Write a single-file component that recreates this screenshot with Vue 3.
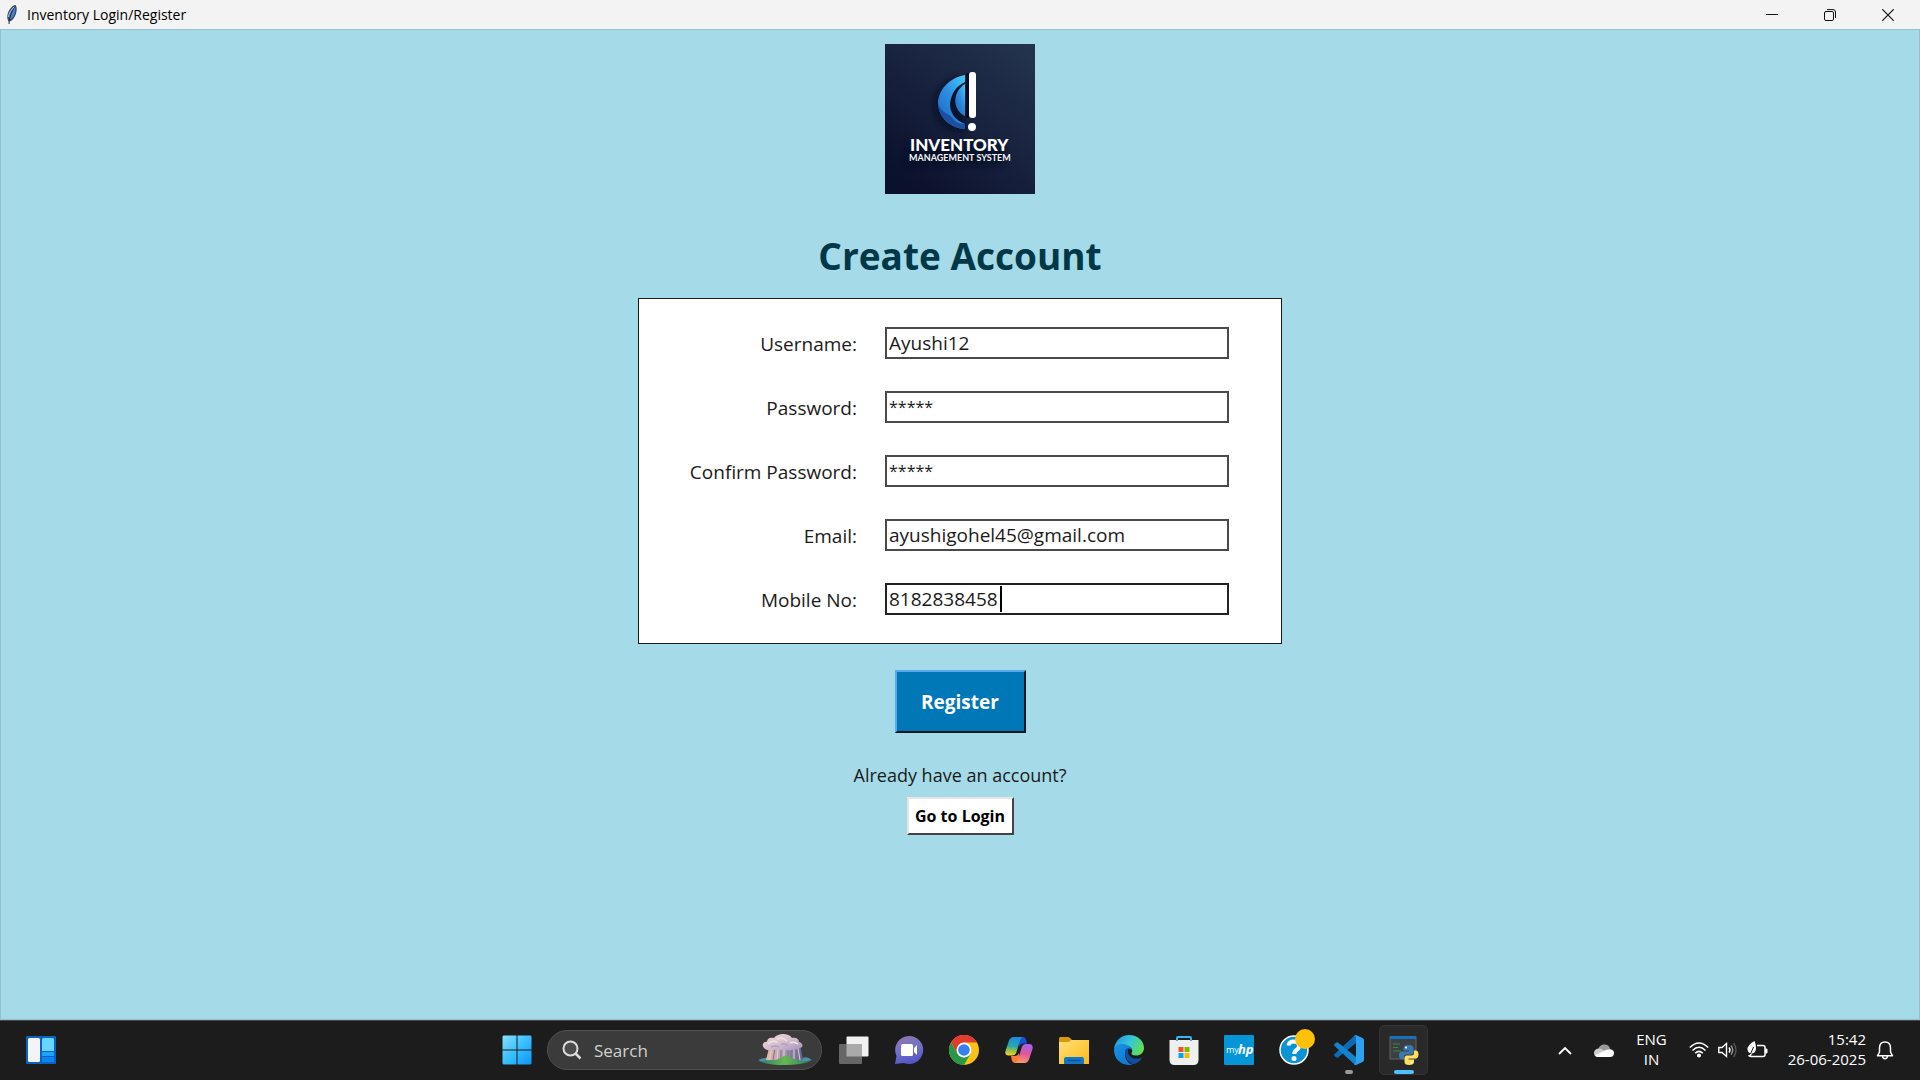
<script setup>
import { reactive } from 'vue'

const fields = reactive([
  { id: 'username', label: 'Username:', value: 'Ayushi12' },
  { id: 'password', label: 'Password:', value: '*****', masked: true },
  { id: 'confirm', label: 'Confirm Password:', value: '*****', masked: true },
  { id: 'email', label: 'Email:', value: 'ayushigohel45@gmail.com' },
  { id: 'mobile', label: 'Mobile No:', value: '8182838458', active: true }
])
</script>

<template>
  <div class="desktop">
    <header class="titlebar">
      <svg class="feather" width="14" height="22" viewBox="0 0 14 22">
        <path d="M10.500 1C12.500 3 12 9 9.500 13C8 16 5.500 17.500 3.500 17.500C1.500 14 2 9 5 5C7 2.500 9 1 10.500 1Z" fill="#3b4a60" />
        <path d="M10 2.500C11 5 10 10 8 13C7 14.500 5.500 15.500 4.500 15.500C4 12 5 8 7 5Z" fill="#3f83dd" />
        <path d="M9.500 3C7 7 4.500 12 4 20" fill="none" stroke="#1f2530" stroke-width="1" />
        <path d="M9 3C6 6 4 9 3.500 13" fill="none" stroke="#c3cad4" stroke-width="1" />
      </svg>
      <span class="caption">Inventory Login/Register</span>
      <button class="winbtn" type="button" aria-label="Minimize">
        <svg width="12" height="12" viewBox="0 0 12 12"><path d="M0 5.500H12" stroke="#111" /></svg>
      </button>
      <button class="winbtn" type="button" aria-label="Restore">
        <svg width="12" height="12" viewBox="0 0 12 12" fill="none" stroke="#111">
          <rect x=".5" y="2.500" width="9" height="9" rx="1.500" />
          <path d="M3 .6H9Q11.500 .6 11.500 3V9" />
        </svg>
      </button>
      <button class="winbtn" type="button" aria-label="Close">
        <svg width="12" height="12" viewBox="0 0 12 12"><path d="M.3 .3L11.700 11.700M11.700 .3L.3 11.700" stroke="#111" stroke-width="1.200" /></svg>
      </button>
    </header>

    <main class="client">
      <svg class="logo" width="150" height="150" viewBox="0 0 150 150">
        <defs>
          <linearGradient id="lgBg" x1="1" y1="0" x2=".2" y2="1">
            <stop offset="0" stop-color="#24344f" /><stop offset=".5" stop-color="#18233f" /><stop offset="1" stop-color="#0b102c" />
          </linearGradient>
          <linearGradient id="lgArc" x1="1" y1="0" x2=".3" y2="1">
            <stop offset="0" stop-color="#43cdfb" /><stop offset=".5" stop-color="#2d8fe2" /><stop offset="1" stop-color="#1f6ac4" />
          </linearGradient>
          <filter id="lgSh" x="-30%" y="-30%" width="160%" height="160%"><feGaussianBlur stdDeviation="3" /></filter>
        </defs>
        <rect width="150" height="150" fill="url(#lgBg)" />
        <path d="M76 32C58 36 48 50 49 62C50 76 62 88 80 88Z" fill="#050920" opacity=".7" filter="url(#lgSh)" />
        <path d="M22 100H120V122H20Z" fill="#050920" opacity=".6" filter="url(#lgSh)" />
        <path d="M80 31C64 34 53 46 53 60C54 74 65 84 80 85V80C70 76 65 69 65 60C66 50 71 42 80 38Z" fill="url(#lgArc)" />
        <path d="M53 59C55 69 65 69 69 76C72 79 76 80 80 80V85C65 84 54 74 53 59Z" fill="#1d4f9f" />
        <path d="M80 40C67 48 67 66 80 72Z" fill="url(#lgArc)" />
        <rect x="81" y="29" width="3" height="45" fill="#070c20" />
        <rect x="84" y="28" width="7" height="46" rx="3" fill="#fff" />
        <circle cx="87" cy="83" r="4" fill="#fff" />
        <text x="25" y="107" class="logo-a">INVENTORY</text>
        <text x="24" y="117" class="logo-b">MANAGEMENT SYSTEM</text>
      </svg>

      <h1>Create Account</h1>

      <form id="register" class="card" @submit.prevent>
        <div v-for="f in fields" :key="f.id" class="row">
          <label :for="f.id">{{ f.label }}</label>
          <div class="entry">
            <input :id="f.id" v-model="f.value" type="text" autocomplete="off" :class="{ active: f.active, masked: f.masked }" />
            <span v-if="f.active" class="caret"></span>
          </div>
        </div>
      </form>

      <button class="register" type="submit" form="register">Register</button>
      <p>Already have an account?</p>
      <button class="login" type="button">Go to Login</button>
    </main>

    <footer class="taskbar">
      <div class="left">
        <svg width="30" height="28" viewBox="0 0 30 28">
          <rect width="30" height="28" rx="1" fill="#0c63bd" />
          <rect x="2" y="2" width="12" height="24" rx="1.500" fill="#f4f4f6" />
          <path d="M16 3.500Q16 2 17.500 2H26.500Q28 2 28 3.500V15H16Z" fill="#66d5ff" />
          <rect x="16" y="16" width="12" height="4" fill="#1ba4ff" />
          <rect x="16" y="21" width="12" height="5" fill="#0a86f2" />
        </svg>
      </div>

      <nav class="apps">
        <button class="app" type="button" aria-label="Start">
          <svg width="30" height="30" viewBox="0 0 30 30">
            <defs><linearGradient id="win" x1="0" y1="0" x2="1" y2="1"><stop offset="0" stop-color="#86e0ff" /><stop offset=".5" stop-color="#39bffd" /><stop offset="1" stop-color="#0c95fb" /></linearGradient></defs>
            <path d="M1.500 .5H14.500V14.500H.5V1.500ZM15.500 .5H28.500L29.500 1.500V14.500H15.500ZM.5 15.500H14.500V29.500H1.500L.5 28.500ZM15.500 15.500H29.500V28.500L28.500 29.500H15.500Z" fill="url(#win)" />
          </svg>
        </button>

        <label class="search">
          <svg width="20" height="20" viewBox="0 0 20 20" fill="none" stroke="#dcdcdc" stroke-width="2">
            <circle cx="8.500" cy="8.500" r="7" fill="#4c4c4c" /><path d="M13.500 13.500L18.500 18.500" stroke-width="2.500" />
          </svg>
          <input type="text" placeholder="Search" aria-label="Search" />
          <svg class="scene" width="54" height="32" viewBox="0 0 54 32">
            <defs>
              <linearGradient id="pil" x1="0" x2="1"><stop offset="0" stop-color="#e8b8a4" /><stop offset=".4" stop-color="#b9a4b8" /><stop offset="1" stop-color="#58658c" /></linearGradient>
              <linearGradient id="hill" x1="0" x2="1"><stop offset="0" stop-color="#2c7f58" /><stop offset=".5" stop-color="#67b756" /><stop offset="1" stop-color="#2a7a61" /></linearGradient>
              <linearGradient id="puff" x1="0" x2="1" y1="0" y2="1"><stop offset="0" stop-color="#efdcd6" /><stop offset=".5" stop-color="#d6bfd0" /><stop offset="1" stop-color="#a692bf" /></linearGradient>
            </defs>
            <path d="M0 26Q8 22 14 25H42Q48 21 54 26Q44 30 27 30Q8 30 0 26Z" fill="#4a8eb0" />
            <path d="M12 10H42L45 26H8Z" fill="url(#pil)" />
            <path d="M14 14L11 26M20 14L19 26M26 14V24M36 14V25M40 14L42 26" stroke="#e9cfc6" />
            <path d="M17 14L15 26M23 14V25M30 14V25M33 14V25" stroke="#77708c" />
            <path d="M6 14C3 11 6 7 9 8C9 4 13 3 16 4C18 1 22 0 25 0C29 0 32 1 34 4C38 3 41 5 41 8C45 9 46 13 42 14C39 16 36 15 34 16C30 17 27 15 24 16C20 17 17 15 14 16C11 17 8 16 6 14Z" fill="url(#puff)" />
            <path d="M10 10Q14 6 19 8M19 5Q25 3 29 7M32 9Q36 7 40 10" fill="none" stroke="#f2e4df" stroke-width="1.500" />
            <path d="M13 13Q17 11 21 13M23 10Q27 9 30 12" fill="none" stroke="#b49fbc" stroke-width="1.500" />
            <path d="M1 27Q10 27 18 26L28 21L38 26Q46 28 53 27Q44 31 27 31Q10 31 1 27Z" fill="url(#hill)" />
          </svg>
        </label>

        <button class="app" type="button" aria-label="Task View">
          <svg width="30" height="28" viewBox="0 0 30 28"><rect x="7.500" y=".5" width="22" height="20" rx="1" fill="#f1f1f1" /><rect x="0" y="8" width="23" height="20" rx="1" fill="#666" /><path d="M7.500 8H23V20.500H7.500Z" fill="#aaa" /></svg>
        </button>
        <button class="app" type="button" aria-label="Chat">
          <svg width="30" height="30" viewBox="0 0 30 30">
            <defs><linearGradient id="chat" x1=".2" y1="0" x2=".5" y2="1"><stop offset="0" stop-color="#9076ae" /><stop offset=".5" stop-color="#7272c8" /><stop offset="1" stop-color="#5453c8" /></linearGradient></defs>
            <path d="M15 1A14 14 0 1 1 10 28L1 29L2.500 21A14 14 0 0 1 15 1Z" fill="url(#chat)" />
            <rect x="7" y="9" width="12" height="12" rx="1.500" fill="#fff" /><path d="M20 13L23 10V20L20 17Z" fill="#fff" />
          </svg>
        </button>
        <button class="app" type="button" aria-label="Chrome">
          <svg width="30" height="30" viewBox="0 0 30 30">
            <circle cx="15" cy="15" r="15" fill="#fbc116" />
            <path d="M15 15L8.500 18.700L2 7.500A15 15 0 0 1 28 7.500H15Z" fill="#e33b2e" />
            <path d="M15 22.500L8.500 18.700L2 7.500A15 15 0 0 0 15 30L21.500 18.700Z" fill="#279847" />
            <circle cx="15" cy="15" r="7.500" fill="#fff" /><circle cx="15" cy="15" r="5.800" fill="#3480ee" />
          </svg>
        </button>
        <button class="app" type="button" aria-label="Copilot">
          <svg width="30" height="30" viewBox="0 0 30 30">
            <defs>
              <linearGradient id="cpA" x1=".5" y1="0" x2=".4" y2="1"><stop offset="0" stop-color="#178de8" /><stop offset=".5" stop-color="#2aa7a8" /><stop offset=".8" stop-color="#a9c63b" /><stop offset="1" stop-color="#f6cf26" /></linearGradient>
              <linearGradient id="cpB" x1=".6" y1="0" x2=".4" y2="1"><stop offset="0" stop-color="#a462f0" /><stop offset=".5" stop-color="#e0559f" /><stop offset="1" stop-color="#fb9a62" /></linearGradient>
            </defs>
            <path d="M15 2H19.500Q21.500 2 22.200 5L23 8.500H20Q16 8.500 15 12Z" fill="#1453d4" />
            <path d="M15 28H10.500Q8.500 28 7.800 25L7 21H10Q14 21 15 18Z" fill="#fb7c34" />
            <path d="M9.500 2H19Q16.500 3 15.500 7L12.500 17Q11.500 20.500 8 20.500H4.500Q.5 20.500 1.500 16L5 5.500Q6.500 2 9.500 2Z" fill="url(#cpA)" />
            <path d="M20.500 28H11Q13.500 27 14.500 23L17.500 13Q18.500 9 22 9H25.500Q29.500 9.500 28.500 14L25 24.500Q23.500 28 20.500 28Z" fill="url(#cpB)" />
          </svg>
        </button>
        <button class="app" type="button" aria-label="File Explorer">
          <svg width="30" height="28" viewBox="0 0 30 28">
            <defs><linearGradient id="fol" x1="0" y1="0" x2="1" y2="1"><stop offset="0" stop-color="#ffe179" /><stop offset="1" stop-color="#fdb917" /></linearGradient></defs>
            <path d="M0 2.500Q0 1 1.500 1H9Q10 1 11 2L13 4V10H0Z" fill="#d99b0b" />
            <path d="M0 6H10L12 4H30V28H0Z" fill="url(#fol)" />
            <path d="M5 28V23Q5 21 7 21H23Q25 21 25 23V28Z" fill="#1177c9" /><path d="M9 24.500H21" stroke="#0b4f94" stroke-width="1.500" stroke-linecap="round" />
          </svg>
        </button>
        <button class="app" type="button" aria-label="Edge">
          <svg width="30" height="30" viewBox="0 0 30 30">
            <defs>
              <linearGradient id="edA" x1="0" y1=".2" x2="1" y2=".6"><stop offset="0" stop-color="#2196e0" /><stop offset=".5" stop-color="#34c6da" /><stop offset="1" stop-color="#63e04e" /></linearGradient>
              <linearGradient id="edB" x1="0" y1="0" x2="1" y2="1"><stop offset="0" stop-color="#1a94e2" /><stop offset="1" stop-color="#0d70cf" /></linearGradient>
            </defs>
            <path d="M0 14C1 6 7 0 15 0C24 0 30 6 30 13C30 18 26 20.500 22 20.500C18.500 20.500 17 19 17.500 18C19 16 18.500 12 14 11C8 9.500 3 10 0 14Z" fill="url(#edA)" />
            <path d="M0 15C1 9.500 8 7.500 14 10.500C17 12 18 13 18 15C15 12 11 14 11 19C11 25 15 29.500 19 29.500C9 32 0 25 0 15Z" fill="url(#edB)" />
            <path d="M11.500 14.500C9.500 20 13 27 19 29.300C23 28.500 26.500 26 28 22.500C24 24.500 18 24.500 15 20C13.500 18 13.500 15 15 13.500C13.500 13.200 12.300 13.500 11.500 14.500Z" fill="#0e4fa2" />
          </svg>
        </button>
        <button class="app" type="button" aria-label="Microsoft Store">
          <svg width="30" height="30" viewBox="0 0 30 30">
            <path d="M8 8V3Q8 2 9 2H21Q22 2 22 3V8" fill="none" stroke="#35b7ec" stroke-width="2" />
            <path d="M.5 5H29.500V25Q29.500 30 24.500 30H5.500Q.5 30 .5 25Z" fill="#efefef" />
            <path d="M8 6V3.500M22 6V3.500" stroke="#35b7ec" stroke-width="2" />
            <path d="M9.500 12H14.500V17H9.500Z" fill="#f25022" /><path d="M15.500 12H20.500V17H15.500Z" fill="#7fba00" /><path d="M9.500 18H14.500V23H9.500Z" fill="#00a4ef" /><path d="M15.500 18H20.500V23H15.500Z" fill="#ffb900" />
          </svg>
        </button>
        <button class="app" type="button" aria-label="myHP">
          <svg width="30" height="30" viewBox="0 0 30 30"><rect width="30" height="30" rx="1" fill="#0496d6" /><text x="2" y="18" class="my">my</text><text x="14" y="19" class="hp">hp</text></svg>
        </button>
        <button class="app" type="button" aria-label="HP Support">
          <svg width="30" height="30" viewBox="0 0 30 30">
            <circle cx="15" cy="15" r="14" fill="#0a94d6" stroke="#fff" stroke-width="1.500" />
            <path d="M9.500 10.500Q10 6.500 15 6.500Q20 6.500 20 11Q20 13.500 17.500 15Q15.300 16.500 15.300 19" fill="none" stroke="#fff" stroke-width="4" /><circle cx="15" cy="23.500" r="2.500" fill="#fff" />
          </svg>
          <i class="badge"></i>
        </button>
        <button class="app" type="button" aria-label="Visual Studio Code">
          <svg width="30" height="30" viewBox="0 0 30 30">
            <path d="M22 0L22 8L4 22.500Q3 23 2 22.300L.5 21Q-.3 20 .6 19L20 1Z" fill="#0a6cb8" />
            <path d="M22 30V22L4 7.500Q3 7 2 7.700L.5 9Q-.3 10 .6 11L20 29Z" fill="#1384cc" />
            <path d="M22 0L28.500 3Q30 3.800 30 5V25Q30 26.300 28.500 27L22 30Q20.500 30.200 20 29Q22 29.500 22 27V3Q22 .5 20 1Z" fill="#2ba1f1" />
          </svg>
          <i class="dot"></i>
        </button>
        <button class="app current" type="button" aria-label="Python">
          <svg width="30" height="30" viewBox="0 0 30 30">
            <rect x="1" y="2" width="26" height="22" fill="#3c3f42" stroke="#626466" /><rect x="1" y="1" width="26" height="3" fill="#1871b8" />
            <path d="M4 9H11M4 12.500H9M4 16H12" stroke="#2f8a45" stroke-width="1.200" />
            <path d="M19.500 10Q14.500 10 14.500 13V15.500H20V16.500H13Q10 16.500 10 20Q10 24.500 13 24.500H15V21.500Q15 19.500 17.500 19.500H22.500Q24.500 19.500 24.500 17V13Q24.500 10 19.500 10Z" fill="#3a79b0" />
            <path d="M20 30Q25 30 25 27V24.500H19.500V23.500H26Q29.500 23.500 29.500 19.500Q29.500 15.500 26.500 15.500H25V18Q25 20.500 22.500 20.500H17.500Q15.500 20.500 15.500 23V27Q15.500 30 20 30Z" fill="#ffdf5c" />
            <circle cx="17" cy="12.500" r="1" fill="#fff" /><circle cx="22.500" cy="27.500" r="1" fill="#fff" />
          </svg>
          <i class="line"></i>
        </button>
      </nav>

      <div class="tray">
        <svg class="chev" width="14" height="9" viewBox="0 0 14 9"><path d="M1 8L7 2L13 8" fill="none" stroke="#fff" stroke-width="1.800" /></svg>
        <svg class="cloud" width="20" height="13" viewBox="0 0 20 13">
          <path d="M4 6C5 1 9 0 11 .5C14 .8 16 3 16 5C19 5.500 20 7 20 9L10 10L1 8Z" fill="#999" />
          <path d="M0 9Q0 5 4.500 4.500Q7 4 10 6.500L17 10Q15 13 14 13H4Q0 13 0 9Z" fill="#ccc" />
          <path d="M1 11L11 6.500Q13 5 16 5.500Q20 6 20 9.500Q19.500 13 16 13H4Q2 13 1 11Z" fill="#fff" />
        </svg>
        <span class="lang">ENG<br />IN</span>
        <svg class="wifi" width="20" height="16" viewBox="0 0 20 16" fill="none" stroke="#fff" stroke-width="1.500">
          <path d="M.8 5.500Q10-3.500 19.200 5.500M3.500 8.500Q10 2 16.500 8.500M6.200 11.200Q10 7.500 13.800 11.200" /><circle cx="10" cy="13.500" r="1.300" fill="#fff" />
        </svg>
        <svg class="vol" width="20" height="18" viewBox="0 0 20 18" fill="none" stroke="#fff" stroke-width="1.400">
          <path d="M.8 6.500H4L8.500 2.500V15.500L4 11.500H.8Z" /><path d="M11 6.500Q13 9 11 11.500" /><path d="M13 4.500Q16.500 9 13 13.500" stroke="#999" /><path d="M15.500 2Q20.500 9 15.500 16" stroke="#555" />
        </svg>
        <svg class="batt" width="21" height="18" viewBox="0 0 21 18">
          <path d="M10 4.500H16Q18 4.500 18 6.500V13.500Q18 15.500 16 15.500H4Q2 15.500 2 14" fill="none" stroke="#fff" stroke-width="1.500" /><path d="M18.500 8H20V12H18.500Z" fill="#fff" stroke="#fff" />
          <path d="M7.500 0Q0 4 .5 9Q1 12 3.500 12.500L2 15H4L5 12.500Q9 12 9 7Q9 3 7.500 0Z" fill="#fff" /><path d="M6.500 6L3.500 13" stroke="#1c1c1c" />
        </svg>
        <time class="clock">15:42<br />26-06-2025</time>
        <svg class="bell" width="18" height="19" viewBox="0 0 18 19" fill="none" stroke="#fff" stroke-width="1.500">
          <path d="M9 1Q3.500 1 3.500 7V11L1.500 14.800H16.500L14.500 11V7Q14.500 1 9 1Z" stroke-linejoin="round" /><path d="M6.500 15Q6.800 17.800 9 17.800Q11.200 17.800 11.500 15" />
        </svg>
      </div>
    </footer>
  </div>
</template>

<style>
body {
  margin: 0;
}
</style>

<style scoped>
.desktop {
  min-height: 100vh;
  display: flex;
  flex-direction: column;
  font-family: "Open Sans", "Noto Sans", sans-serif;
  background: #a5dae8;
  color: #1a1a1a;
}
.desktop * {
  box-sizing: border-box;
}
button,
input {
  font: inherit;
  margin: 0;
}
svg {
  display: block;
  flex: none;
}
.titlebar {
  height: 29px;
  display: flex;
  align-items: center;
  background: #f3f3f3;
  color: #000;
}
.feather {
  margin: 0 8px 0 5px;
}
.caption {
  flex: 1;
  font-size: 14px;
  line-height: 20px;
}
.winbtn {
  width: 58px;
  height: 29px;
  padding: 0;
  border: 0;
  background: none;
  display: grid;
  place-items: center;
}
.winbtn:last-child {
  margin-right: 3px;
}
.client {
  flex: 1;
  display: flex;
  flex-direction: column;
  align-items: center;
  padding: 14px 0;
  border: 1px solid #93c0cb;
}
.logo-a {
  font: 900 17px "Lato", sans-serif;
  fill: #fff;
}
.logo-b {
  font: 700 9px "Lato", sans-serif;
  fill: #f4f4f4;
}
h1 {
  margin: 34px 0 14px;
  font-size: 37px;
  line-height: 56px;
  font-weight: 700;
  color: #003847;
}
.card {
  width: 644px;
  padding: 28px 52px 28px 24px;
  display: flex;
  flex-direction: column;
  gap: 32px;
  background: #fff;
  border: 1px solid #1b1b1b;
}
.row {
  display: flex;
  align-items: center;
  justify-content: flex-end;
  gap: 28px;
  font-size: 19px;
}
.row label {
  padding-top: 2px;
  line-height: 30px;
}
.entry {
  position: relative;
}
.entry input {
  display: block;
  width: 344px;
  height: 32px;
  padding: 0 2px;
  border: 2px solid #4a4a4a;
  border-radius: 0;
  background: #fff;
  color: #1a1a1a;
  outline: 0;
}
.entry input.active {
  border-color: #222;
}
.entry input.masked {
  font-size: 16px;
}
.caret {
  position: absolute;
  left: 115px;
  top: 3px;
  width: 2px;
  height: 26px;
  background: #000;
}
.register {
  width: 131px;
  height: 63px;
  margin-top: 26px;
  border: 2px solid;
  border-color: #58aaec #101820 #101820 #58aaec;
  background: #0077b6;
  color: #fff;
  font-size: 19px;
  font-weight: 700;
}
p {
  margin: 28px 0 8px;
  font-size: 18px;
  line-height: 28px;
}
.login {
  width: 107px;
  height: 38px;
  padding: 0;
  border: 2px solid;
  border-color: #e6e6e6 #444 #444 #e6e6e6;
  background: #fff;
  color: #000;
  font-size: 16px;
  font-weight: 700;
}
.taskbar {
  height: 60px;
  padding-bottom: 1px;
  display: grid;
  grid-template-columns: 1fr auto 1fr;
  align-items: center;
  background: #1c1c1c;
  border-top: 1px solid #454b4d;
  color: #fff;
}
.left {
  padding-left: 26px;
}
.apps {
  display: flex;
  align-items: center;
}
.app {
  position: relative;
  width: 55px;
  height: 50px;
  padding: 0;
  border: 0;
  background: none;
  display: grid;
  place-items: center;
}
.search {
  width: 275px;
  height: 40px;
  margin: 0 4px 0 3px;
  padding: 0 9px 0 14px;
  display: flex;
  align-items: center;
  gap: 12px;
  border: 1px solid #505050;
  border-radius: 20px;
  background: #3b3b3b;
}
.search input {
  flex: 1;
  min-width: 0;
  padding: 0;
  border: 0;
  background: none;
  color: #fff;
  font-size: 17px;
}
.search input::placeholder {
  color: #d0d0d0;
  opacity: 1;
}
.my {
  font: 400 9px "Open Sans", sans-serif;
  fill: #fff;
}
.hp {
  font: italic 700 13px "Open Sans", sans-serif;
  fill: #fff;
}
.badge {
  position: absolute;
  top: 4px;
  right: 6px;
  width: 20px;
  height: 20px;
  border-radius: 50%;
  background: #ffc107;
}
.dot,
.line {
  position: absolute;
  bottom: 1px;
  left: 50%;
  width: 8px;
  height: 4px;
  border-radius: 2px;
  background: #9a9a9a;
  transform: translateX(-50%);
}
.line {
  width: 20px;
  background: #4cc2ff;
}
.current::before {
  content: "";
  position: absolute;
  inset: 0 3px;
  border: 1px solid #343434;
  border-radius: 5px;
  background: #292929;
}
.current svg {
  position: relative;
}
.tray {
  display: flex;
  align-items: center;
  justify-content: flex-end;
  padding-right: 26px;
  font-size: 15px;
  line-height: 20px;
}
.chev,
.cloud {
  margin-right: 22px;
}
.lang {
  text-align: center;
  margin-right: 22px;
}
.wifi,
.vol {
  margin-right: 9px;
}
.batt {
  margin-right: 20px;
}
.lang,
.clock {
  padding-bottom: 2px;
}
.clock {
  text-align: right;
  margin-right: 10px;
}
</style>
